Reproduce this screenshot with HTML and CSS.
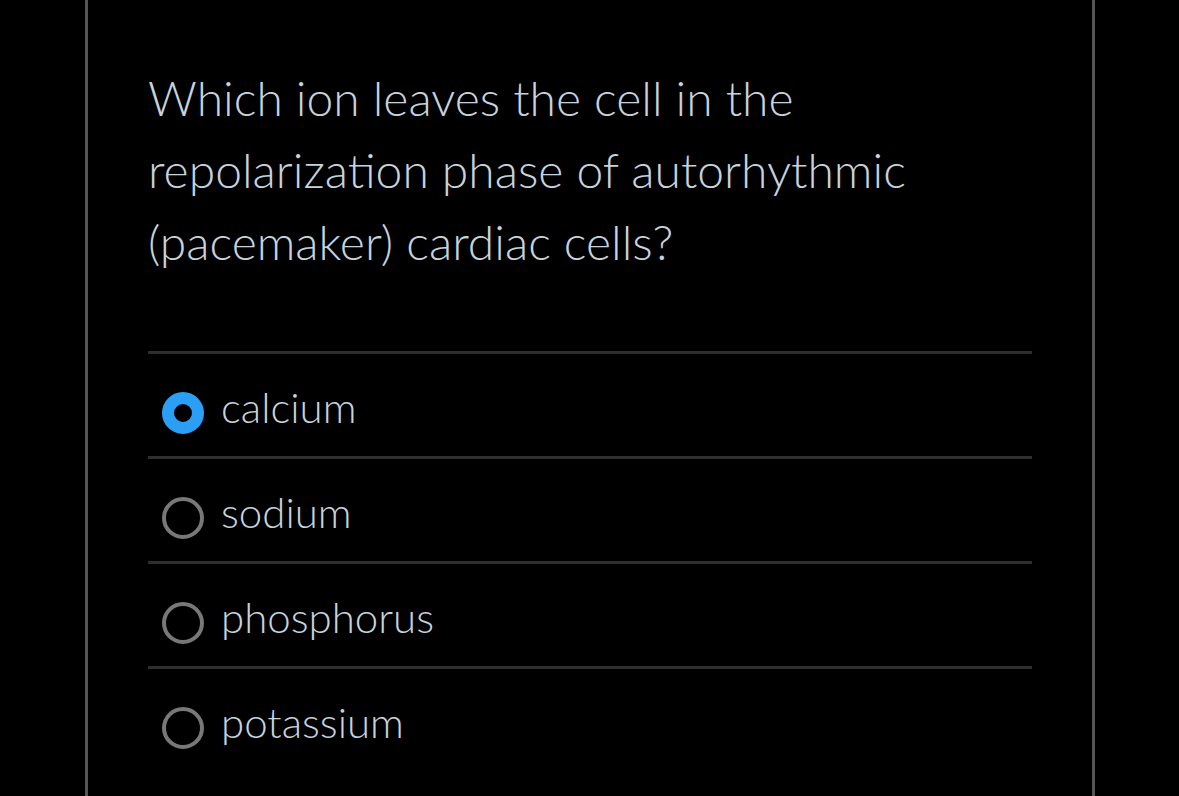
FILE: index.html
```html
<!DOCTYPE html>
<html lang="en">
<head>
<meta charset="utf-8">
<title>Quiz</title>
<link rel="stylesheet" href="styles.css">
</head>
<body>
<main class="frame">
  <h1 class="question">Which ion leaves the cell in the repolarization phase of autorhythmic (pacemaker) cardiac cells?</h1>
  <ul class="options">
    <li class="option"><span class="radio selected"></span><span class="label">calcium</span></li>
    <li class="option"><span class="radio"></span><span class="label">sodium</span></li>
    <li class="option"><span class="radio"></span><span class="label">phosphorus</span></li>
    <li class="option"><span class="radio"></span><span class="label">potassium</span></li>
  </ul>
</main>
</body>
</html>
```
FILE: styles.css
```css
html, body {
  margin: 0;
  padding: 0;
  background: #000;
  height: 100%;
  overflow: hidden;
}
body {
  font-family: "Lato Light", Lato, "Open Sans", sans-serif;
  color: #c7d3dc;
}
.frame {
  box-sizing: border-box;
  margin-left: 85px;
  width: 1010px;
  min-height: 796px;
  border-left: 3px solid #555;
  border-right: 3px solid #555;
  padding: 62px 60px 0 60px;
}
.question {
  margin: 0;
  font-size: 48px;
  font-weight: 300;
  line-height: 72px;
}
.options {
  list-style: none;
  margin: 73px 0 0 0;
  padding: 0;
}
.option {
  box-sizing: border-box;
  height: 105px;
  border-top: 3px solid #2e2e2e;
  padding: 4px 0 0 14px;
  display: flex;
  align-items: center;
  gap: 17px;
}
.radio {
  box-sizing: border-box;
  width: 42px;
  height: 42px;
  border-radius: 50%;
  border: 4px solid #787878;
  margin-top: 12px;
  flex: none;
}
.radio.selected {
  border: 12px solid #2a9ff5;
}
.label {
  font-size: 42px;
  font-weight: 300;
  line-height: 48px;
}
```
